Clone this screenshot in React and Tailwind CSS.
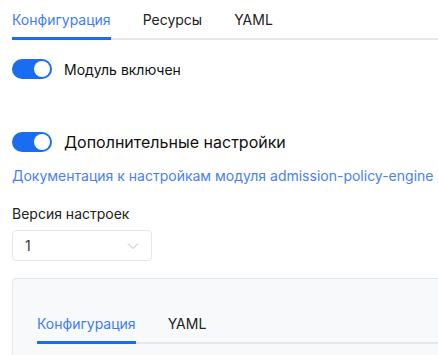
import { useState } from "react";

function Toggle({ on, onChange }) {
  return (
    <button
      onClick={() => onChange(!on)}
      className={
        "relative h-5 w-10 shrink-0 rounded-full transition-colors " +
        (on ? "bg-[#1a6cf2]" : "bg-gray-300")
      }
    >
      <span
        className={
          "absolute top-[2px] h-4 w-4 rounded-full bg-white transition-all " +
          (on ? "left-[22px]" : "left-[2px]")
        }
      />
    </button>
  );
}

function Tabs({ items, active, onSelect, gap }) {
  return (
    <div className="flex border-b-2 border-[#e4e8ee]">
      {items.map((t, i) => (
        <button
          key={t}
          onClick={() => onSelect(i)}
          className={
            "relative -mb-[2px] pb-[7px] text-[14px] " +
            gap +
            (i === active
              ? " border-b-[3px] border-[#1a6cf2] text-[#3d7cf4]"
              : " border-b-[3px] border-transparent text-[#222]")
          }
        >
          {t}
        </button>
      ))}
    </div>
  );
}

export default function App() {
  const [tab, setTab] = useState(0);
  const [innerTab, setInnerTab] = useState(0);
  const [enabled, setEnabled] = useState(true);
  const [extra, setExtra] = useState(true);

  return (
    <div
      className="h-[355px] w-[438px] overflow-hidden bg-white pl-3"
      style={{ fontFamily: "Inter, 'Noto Sans', sans-serif" }}
    >
      <div className="pt-[9px]">
        <Tabs
          items={["Конфигурация", "Ресурсы", "YAML"]}
          active={tab}
          onSelect={setTab}
          gap="mr-8"
        />
      </div>

      <div className="mt-[18px] flex h-[22px] items-center gap-3">
        <Toggle on={enabled} onChange={setEnabled} />
        <span className="text-[14px] text-[#111]">Модуль включен</span>
      </div>

      <div className="mt-[49px] flex h-[26px] items-center gap-3">
        <Toggle on={extra} onChange={setExtra} />
        <span className="text-[16px] text-[#111]">Дополнительные настройки</span>
      </div>

      <a className="mt-[10px] block text-[14px] text-[#4a80f3]">
        Документация к настройкам модуля admission-policy-engine
      </a>

      <div className="mt-[17px] text-[14px] text-[#222]">Версия настроек</div>

      <div className="mt-[6px] flex h-[31px] w-[140px] items-center justify-between rounded border border-[#e2e5ea] pl-3 pr-3">
        <span className="text-[14px] text-[#333]">1</span>
        <svg width="12" height="8" viewBox="0 0 12 8" fill="none">
          <path d="M1 1.5l5 5 5-5" stroke="#b5bac2" strokeWidth="1" />
        </svg>
      </div>

      <div className="mt-[17px] -mr-2 rounded-tl border-l border-t border-[#e4e6ea] bg-[#f8f9fa] pl-6 pt-[34px]">
        <Tabs
          items={["Конфигурация", "YAML"]}
          active={innerTab}
          onSelect={setInnerTab}
          gap="mr-8"
        />
        <div className="h-20" />
      </div>
    </div>
  );
}
